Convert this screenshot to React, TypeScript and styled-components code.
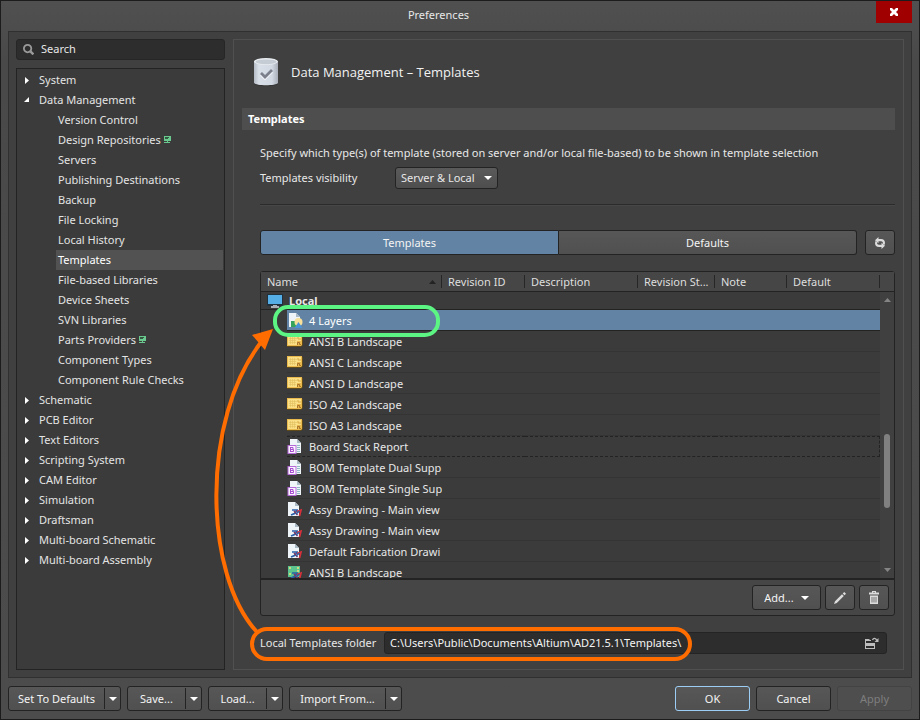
import React from "react";
import styled, { createGlobalStyle, css } from "styled-components";

const Global = createGlobalStyle`
  *, *::before, *::after { box-sizing: border-box; }
  body { margin: 0; background: #4c4c4c; }
  body, button, input, select, table {
    font-family: "Noto Sans", "Open Sans", sans-serif;
    font-size: 11px;
    line-height: 18px;
    color: #e8e8e8;
  }
  button, input, select { margin: 0; padding: 0; }
  svg { display: block; flex: none; }
`;

const Dialog = styled.main`
  position: relative;
  display: flex;
  flex-direction: column;
  height: 100vh;
  min-height: 600px;
  border: 1px solid #1c1c1c;
  background: linear-gradient(#505050, #494949 60px, #4c4c4c);
`;

const TitleBar = styled.header`
  display: flex;
  align-items: flex-start;
  height: 30px;
  padding-right: 7px;
`;

const DialogTitle = styled.h1`
  flex: 1;
  margin: 0;
  padding-top: 5px;
  text-align: center;
  font-size: 11px;
  font-weight: 400;
`;

const CloseButton = styled.button`
  display: grid;
  place-items: center;
  width: 36px;
  height: 22px;
  border: 0;
  background: #a00000;
`;

const Body = styled.div`
  flex: 1;
  min-height: 0;
  display: flex;
  gap: 8px;
  margin: 0 7px;
  padding: 7px;
  border: 1px solid #303030;
  background: #404040;
`;

const Sidebar = styled.nav`
  display: flex;
  flex-direction: column;
  gap: 8px;
  width: 209px;
  flex: none;
`;

const SearchBox = styled.label`
  display: flex;
  align-items: center;
  gap: 7px;
  height: 21px;
  padding: 0 6px 1px;
  border: 1px solid #262626;
  border-radius: 3px;
  background: #2d2d2d;
  input {
    flex: 1;
    min-width: 0;
    border: 0;
    outline: 0;
    background: transparent;
    &::placeholder { color: #e8e8e8; opacity: 1; }
  }
`;

const Tree = styled.ul`
  flex: 1;
  min-height: 0;
  overflow: hidden;
  margin: 0;
  padding: 1px 1px 0 6px;
  list-style: none;
  border: 1px solid #232323;
  background: #3b3b3b;
  ul { margin: 0; padding: 0 0 0 33px; list-style: none; }
`;

const TreeItem = styled.button<{ $active?: boolean; $leaf?: boolean }>`
  display: flex;
  align-items: center;
  gap: ${(p) => (p.$leaf ? 2 : 6)}px;
  width: 100%;
  height: 20px;
  padding-left: ${(p) => (p.$leaf ? 2 : 1)}px;
  border: 0;
  text-align: left;
  white-space: nowrap;
  background: ${(p) => (p.$active ? "#525252" : "transparent")};
  color: ${(p) => (p.$active ? "#ffffff" : "#e4e4e4")};
`;

const Twisty = styled.span`
  width: 9px;
`;

const Group = styled.section`
  flex: 1;
  min-width: 0;
  display: flex;
  flex-direction: column;
  padding: 0 8px 15px;
  border: 1px solid #505050;
`;

const GroupHead = styled.div`
  display: flex;
  align-items: center;
  gap: 12px;
  height: 68px;
  padding: 0 11px 5px;
  h2 {
    margin: 0;
    font-family: "Open Sans", "Noto Sans", sans-serif;
    font-size: 13px;
    font-weight: 400;
    color: #f2f2f2;
  }
`;

const Band = styled.h3`
  margin: 0;
  padding: 2px 6px;
  background: #4e4e4e;
  font-size: 11px;
  font-weight: 700;
  color: #ffffff;
`;

const Form = styled.div`
  flex: 1;
  min-height: 0;
  display: flex;
  flex-direction: column;
  padding: 14px 0 0 18px;
`;

const Note = styled.p`
  margin: 0 0 5px;
`;

const FieldRow = styled.div<{ $labelWidth: number }>`
  display: flex;
  align-items: center;
  label { flex: none; width: ${(p) => p.$labelWidth}px; }
`;

const SelectWrap = styled.span`
  display: grid;
  align-items: center;
  select, svg { grid-area: 1 / 1; }
  svg { justify-self: end; margin-right: 6px; pointer-events: none; }
  select {
    appearance: none;
    width: 103px;
    height: 22px;
    padding: 0 5px;
    border: 1px solid #232323;
    border-radius: 3px;
    background: linear-gradient(#5a5a5a, #4e4e4e);
  }
`;

const Divider = styled.hr`
  width: 100%;
  height: 2px;
  margin: 15px 0 24px;
  border: 0;
  border-top: 1px solid #2b2b2b;
  border-bottom: 1px solid #474747;
`;

const TabRow = styled.div`
  display: flex;
  gap: 8px;
  margin-bottom: 16px;
`;

const Tabs = styled.div`
  flex: 1;
  display: flex;
`;

const raised = css`
  height: 25px;
  border: 1px solid #232323;
  border-radius: 3px;
  background: linear-gradient(#575757, #505050);
  color: #f4f4f4;
`;

const Tab = styled.button<{ $selected?: boolean }>`
  ${raised}
  flex: 1;
  ${(p) =>
    p.$selected
      ? css`
          border-radius: 3px 0 0 3px;
          background: #6283a3;
        `
      : css`
          border-left: 0;
          border-radius: 0 3px 3px 0;
        `}
`;

const Button = styled.button<{ $width: number; $primary?: boolean }>`
  ${raised}
  display: flex;
  align-items: center;
  justify-content: center;
  gap: 7px;
  width: ${(p) => p.$width}px;
  ${(p) => p.$primary && "border-color: #9ccdf5;"}
  &:disabled { border-color: #434343; background: #4e4e4e; color: #7e7e7e; }
`;

const Grid = styled.div`
  flex: 1;
  min-height: 0;
  display: flex;
  flex-direction: column;
  border: 1px solid #232323;
  border-radius: 3px;
  background: #464646;
`;

const List = styled.div`
  position: relative;
  flex: 1;
  min-height: 0;
  overflow: hidden;
  border-bottom: 2px solid #232323;
  background: #3b3b3b;
`;

const Table = styled.table`
  width: 100%;
  table-layout: fixed;
  border-collapse: separate;
  border-spacing: 0;
  th, td { padding: 0; overflow: hidden; white-space: nowrap; text-align: left; }
`;

const Col = styled.col<{ $w?: number }>`
  ${(p) => p.$w && `width: ${p.$w}px;`}
`;

const HeadCell = styled.th`
  height: 20px;
  background: #464646;
  border-bottom: 1px solid #232323;
  font-weight: 400;
  color: #dedede;
`;

const HeadLabel = styled.span`
  display: flex;
  align-items: center;
  justify-content: space-between;
  height: 13px;
  padding: 0 5px 0 6px;
  border-right: 1px solid #262626;
`;

const RootRow = styled.tr`
  td { height: 18px; border-bottom: 1px solid #232323; }
`;

const RootLabel = styled.span`
  display: flex;
  align-items: center;
  gap: 6px;
  height: 17px;
  padding-left: 6px;
  font-weight: 700;
`;

type RowState = "plain" | "selected" | "focused";

const rowSkin = {
  plain: "border-bottom: 1px solid #343434;",
  selected: "border-bottom: 1px solid #232323; background: #6283a3; color: #ffffff;",
  focused: "border-top: 1px dashed #232323; border-bottom: 1px dashed #232323;",
};

const Cell = styled.td<{ $state: RowState; $end?: boolean }>`
  height: 21px;
  ${(p) => rowSkin[p.$state]}
  ${(p) => p.$end && p.$state === "focused" && "border-right: 1px dashed #232323;"}
`;

const NameCell = styled.td`
  height: 21px;
`;

const NameBox = styled.span<{ $state: RowState }>`
  display: flex;
  align-items: center;
  gap: 6px;
  height: 21px;
  margin-left: 26px;
  padding-top: ${(p) => (p.$state === "focused" ? 0 : 2)}px;
  overflow: hidden;
  ${(p) => rowSkin[p.$state]}
`;

const ScrollTrack = styled.div`
  position: absolute;
  top: 20px;
  right: 0;
  bottom: 0;
  width: 14px;
  display: flex;
  flex-direction: column;
  align-items: center;
  padding: 6px 0;
  background: #404040;
`;

const ScrollSpace = styled.span<{ $grow: number }>`
  flex: ${(p) => p.$grow};
`;

const ScrollThumb = styled.span`
  flex: 74;
  width: 6px;
  border-radius: 3px;
  background: #808080;
`;

const GridBar = styled.div`
  display: flex;
  justify-content: flex-end;
  gap: 4px;
  padding: 5px;
`;

const PathRow = styled(FieldRow)`
  margin: 16px 8px 0 0;
`;

const PathBox = styled.div`
  flex: 1;
  display: flex;
  align-items: center;
  height: 22px;
  padding: 0 7px 0 5px;
  border: 1px solid #242424;
  border-radius: 3px;
  background: #2d2d2d;
  input { flex: 1; min-width: 0; border: 0; outline: 0; background: transparent; color: #f4f4f4; }
  button { border: 0; background: transparent; }
`;

const Footer = styled.footer`
  display: flex;
  gap: 6px;
  padding: 8px 7px;
`;

const Spacer = styled.span`
  flex: 1;
`;

const Split = styled.span<{ $width: number }>`
  ${raised}
  display: flex;
  align-items: center;
  width: ${(p) => p.$width}px;
  button {
    height: 100%;
    border: 0;
    background: transparent;
    color: #f4f4f4;
    white-space: nowrap;
  }
  button:first-child { flex: 1; }
  button:last-child {
    display: grid;
    place-items: center;
    width: 16px;
    height: 21px;
    border-left: 1px solid #232323;
  }
`;

const Markup = styled.svg`
  position: absolute;
  top: -1px;
  left: -1px;
  pointer-events: none;
`;

const Caret = () => (
  <svg width="8" height="4" viewBox="0 0 8 4" aria-hidden="true">
    <path d="M0 0H8L4 4Z" fill="#fff" />
  </svg>
);

const Arrow = ({ up }: { up?: boolean }) => (
  <svg width="7" height="4" viewBox="0 0 7 4" aria-hidden="true">
    <path d={up ? "M0 4H7L3.500 0Z" : "M0 0H7L3.500 4Z"} fill="#858585" />
  </svg>
);

const SearchIcon = () => (
  <svg width="11" height="11" viewBox="0 0 11 11" fill="none" stroke="#9a9a9a" aria-hidden="true">
    <circle cx="4.600" cy="4.600" r="3.700" strokeWidth="1.800" />
    <path d="M7.200 7.200L10.400 10.400" strokeWidth="2.400" />
  </svg>
);

const ServerIcon = () => (
  <svg width="8" height="8" viewBox="0 0 8 8" aria-hidden="true">
    <path d="M1 0H8V5H5V6H7V7H1V6H4V5H1Z" fill="#69c98f" />
    <path d="M2 1H6V2H5V3H2Z" fill="#34583f" />
  </svg>
);

const DatabaseIcon = () => (
  <svg width="26" height="30" viewBox="0 0 26 30" aria-hidden="true">
    <defs>
      <linearGradient id="drum">
        <stop offset="0" stopColor="#b4bbc5" />
        <stop offset=".2" stopColor="#d9dfe7" />
        <stop offset=".75" stopColor="#d2d9e3" />
        <stop offset="1" stopColor="#a7aeb8" />
      </linearGradient>
    </defs>
    <path d="M1 5V27C3 30 23 30 25 27V5Z" fill="#2e2e2e" opacity=".6" />
    <path d="M1 4V26C3 29 23 29 25 26V4Z" fill="url(#drum)" />
    <ellipse cx="13" cy="4.500" rx="12" ry="3.500" fill="#e9edf1" />
    <ellipse cx="13" cy="4.800" rx="10.500" ry="2.400" fill="#c6ccd4" />
    <path d="M8 16L12 20L19 13" transform="translate(0 1.500)" fill="none" stroke="#f2f5f8" strokeWidth="2.600" />
    <path d="M8 16L12 20L19 13" fill="none" stroke="#7c7f8c" strokeWidth="2.800" />
  </svg>
);

const MonitorIcon = () => (
  <svg width="16" height="14" viewBox="0 0 16 14" aria-hidden="true">
    <rect width="16" height="12" rx="1" fill="#20303d" />
    <rect x="1" y="1" width="14" height="9" fill="#55aee6" />
    <path d="M6 11H10V12H12V14H4V12H6Z" fill="#a9afb5" />
  </svg>
);

const Page = ({ x = 1 }: { x?: number }) => (
  <>
    <path d={`M${x} 0H${x + 7}L${x + 11} 4V14H${x}Z`} fill="#eef4f8" />
    <path d={`M${x + 7} 0V4H${x + 11}Z`} fill="#a9bac6" />
  </>
);

type FileKind = "layers" | "sheet" | "bom" | "draft" | "pcb";

const Pens = () => (
  <>
    <path d="M5 8H11M4 13L7.500 11.500L10 8.500" fill="none" stroke="#2a5fa8" strokeWidth="1.700" />
    <path d="M7 9L10.500 13" fill="none" stroke="#7d3a63" strokeWidth="1.500" />
    <path d="M10 9.500L14 8L12.500 14" fill="none" stroke="#d8303a" strokeWidth="1.700" />
    <path d="M9 12L12.500 9" fill="none" stroke="#2a5fa8" strokeWidth="1.500" />
  </>
);

const FileIcon = ({ kind }: { kind: FileKind }) => (
  <svg width="16" height="16" viewBox="0 0 16 16" aria-hidden="true">
    {kind === "layers" && (
      <>
        <Page x={2} />
        <rect x="4" y="8" width="6" height="6" fill="#35a35c" />
        <circle cx="11.500" cy="9" r="4" fill="#f6e09a" />
        <path d="M11.500 9L15.500 15H7.500Z" fill="#4b93d6" />
      </>
    )}
    {kind === "sheet" && (
      <>
        <path d="M0 2H16V11L14 13H0Z" fill="#5f4a1c" />
        <path d="M0 1H15V11L14 12H0Z" fill="#eab94e" />
        <path d="M1 2H14V7H10V11H1Z" fill="#fbdf86" />
        <path d="M2 4.500H10M2 6.500H9M2 8.500H9M3.500 3V10M5.500 3V10M7.500 3V10" stroke="#e0c060" strokeWidth=".6" />
        <path d="M11 3V5H14" fill="none" stroke="#d8ab45" />
        <path d="M10.500 11V8.500H12.500V10.500H14" fill="none" stroke="#a8732a" />
      </>
    )}
    {kind === "bom" && (
      <>
        <Page x={3} />
        <path d="M10 6.500H13M10 8.500H13M10 10.500H13M10 12.500H13" stroke="#8fbcc4" />
        <rect x="1" y="6.500" width="8" height="8" fill="#fbf3ff" stroke="#b46ad8" />
        <path d="M3.500 8V13M3 8.500H6V10.500H4M6 10.500H6.500V12.500H3" fill="none" stroke="#a64fd0" />
      </>
    )}
    {kind === "draft" && (
      <>
        <Page />
        <Pens />
      </>
    )}
    {kind === "pcb" && (
      <>
        <rect x="1" y="1" width="12" height="11" fill="#5cc48e" />
        <path d="M2 3H4M10 3H12M2 9H4M10 6H12" stroke="#f0e07a" strokeWidth="1.500" />
        <Pens />
      </>
    )}
  </svg>
);

const RefreshIcon = () => (
  <svg width="12" height="12" viewBox="0 0 12 12" aria-hidden="true">
    <path
      d="M4.500 0V2H7C9.500 2 11 3.500 11 6L10.500 8L8.800 7C9.300 5.200 8.500 4.300 7 4.300H4.500V6.300L1 3.200Z"
      fill="#dcdcdc"
    />
    <path
      d="M7.500 12V10H5C2.500 10 1 8.500 1 6L1.500 4L3.200 5C2.700 6.800 3.500 7.700 5 7.700H7.500V5.700L11 8.800Z"
      fill="#dcdcdc"
    />
  </svg>
);

const PencilIcon = () => (
  <svg width="12" height="12" viewBox="0 0 12 12" fill="#dcdcdc" aria-hidden="true">
    <path d="M0 12L1 9.200L8 2.200L9.800 4L2.800 11ZM8.700 1.500L10.200 0L12 1.800L10.500 3.300Z" />
  </svg>
);

const TrashIcon = () => (
  <svg width="10" height="13" viewBox="0 0 10 13" aria-hidden="true">
    <path d="M3 0H7V1.500H10V3.500H0V1.500H3ZM4 1V1.500H6V1Z" fill="#dcdcdc" />
    <path d="M1 4.500H9V13H1Z" fill="#dcdcdc" />
    <path d="M3 6V11.500M5 6V11.500M7 6V11.500" stroke="#777" />
  </svg>
);

const BrowseIcon = () => (
  <svg width="14" height="12" viewBox="0 0 14 12" fill="none" aria-hidden="true">
    <path d="M0 2H4L5 3H6V4H1V6H10V12H0ZM1 9V11H9V9Z" fill="#bdbdbd" fillRule="evenodd" />
    <path d="M7.500 3C8.500 .8 10.500 .8 12 3.500" stroke="#bdbdbd" strokeWidth="1.400" />
    <path d="M13.500 1V5H9.500Z" fill="#bdbdbd" />
  </svg>
);

const leaves: { name: string; server?: boolean }[] = [
  { name: "Version Control" },
  { name: "Design Repositories", server: true },
  { name: "Servers" },
  { name: "Publishing Destinations" },
  { name: "Backup" },
  { name: "File Locking" },
  { name: "Local History" },
  { name: "Templates" },
  { name: "File-based Libraries" },
  { name: "Device Sheets" },
  { name: "SVN Libraries" },
  { name: "Parts Providers", server: true },
  { name: "Component Types" },
  { name: "Component Rule Checks" },
];

const branches = [
  "System", "Data Management", "Schematic", "PCB Editor", "Text Editors", "Scripting System",
  "CAM Editor", "Simulation", "Draftsman", "Multi-board Schematic", "Multi-board Assembly",
];

const columns: { name: string; width?: number }[] = [
  { name: "Name", width: 181 },
  { name: "Revision ID", width: 83 },
  { name: "Description" },
  { name: "Revision St...", width: 77 },
  { name: "Note", width: 72 },
  { name: "Default", width: 93 },
];

const files: { name: string; kind: FileKind; state?: RowState }[] = [
  { name: "4 Layers", kind: "layers", state: "selected" },
  { name: "ANSI B Landscape", kind: "sheet" },
  { name: "ANSI C Landscape", kind: "sheet" },
  { name: "ANSI D Landscape", kind: "sheet" },
  { name: "ISO A2 Landscape", kind: "sheet" },
  { name: "ISO A3 Landscape", kind: "sheet" },
  { name: "Board Stack Report", kind: "bom", state: "focused" },
  { name: "BOM Template Dual Supp", kind: "bom" },
  { name: "BOM Template Single Sup", kind: "bom" },
  { name: "Assy Drawing - Main view", kind: "draft" },
  { name: "Assy Drawing - Main view", kind: "draft" },
  { name: "Default Fabrication Drawi", kind: "draft" },
  { name: "ANSI B Landscape", kind: "pcb" },
];

const splitButtons = [
  { name: "Set To Defaults", width: 113 },
  { name: "Save...", width: 75 },
  { name: "Load...", width: 75 },
  { name: "Import From...", width: 113 },
];

function NavTree() {
  return (
    <Tree>
      {branches.map((name) => {
        const open = name === "Data Management";
        return (
          <li key={name}>
            <TreeItem aria-expanded={open}>
              <Twisty>
                <svg width="6" height="8" viewBox="0 0 6 8" aria-hidden="true">
                  <path d={open ? "M5 1V6H0Z" : "M1 1L5 4.500L1 8Z"} fill="#fff" />
                </svg>
              </Twisty>
              {name}
            </TreeItem>
            {open && (
              <ul>
                {leaves.map((leaf) => (
                  <li key={leaf.name}>
                    <TreeItem $leaf $active={leaf.name === "Templates"}>
                      {leaf.name}
                      {leaf.server && <ServerIcon />}
                    </TreeItem>
                  </li>
                ))}
              </ul>
            )}
          </li>
        );
      })}
    </Tree>
  );
}

function TemplateList() {
  return (
    <List>
      <Table>
        <colgroup>
          {columns.map((c) => (
            <Col key={c.name} $w={c.width} />
          ))}
          <Col $w={14} />
        </colgroup>
        <thead>
          <tr>
            {columns.map((c) => (
              <HeadCell key={c.name} scope="col">
                <HeadLabel>
                  {c.name}
                  {c.name === "Name" && (
                    <svg width="7" height="4" viewBox="0 0 7 4" aria-hidden="true">
                      <path d="M0 4H7L3.500 0Z" fill="#232323" />
                    </svg>
                  )}
                </HeadLabel>
              </HeadCell>
            ))}
            <HeadCell as="td" />
          </tr>
        </thead>
        <tbody>
          <RootRow>
            <td colSpan={7}>
              <RootLabel>
                <MonitorIcon />
                Local
              </RootLabel>
            </td>
          </RootRow>
          {files.map((f, i) => {
            const state = f.state ?? "plain";
            return (
              <tr key={i}>
                <NameCell>
                  <NameBox $state={state}>
                    <FileIcon kind={f.kind} />
                    {f.name}
                  </NameBox>
                </NameCell>
                {columns.slice(1).map((c) => (
                  <Cell key={c.name} $state={state} $end={c.name === "Default"} />
                ))}
                <td />
              </tr>
            );
          })}
        </tbody>
      </Table>
      <ScrollTrack>
        <Arrow up />
        <ScrollSpace $grow={131} />
        <ScrollThumb />
        <ScrollSpace $grow={60} />
        <Arrow />
      </ScrollTrack>
    </List>
  );
}

export default function App() {
  return (
    <>
      <Global />
      <Dialog>
        <TitleBar>
          <DialogTitle>Preferences</DialogTitle>
          <CloseButton aria-label="Close">
            <svg width="8" height="8" viewBox="0 0 8 8" aria-hidden="true">
              <path d="M0 0H2L4 2L6 0H8V2L6 4L8 6V8H6L4 6L2 8H0V6L2 4L0 2Z" fill="#fff" />
            </svg>
          </CloseButton>
        </TitleBar>
        <Body>
          <Sidebar>
            <SearchBox>
              <SearchIcon />
              <input type="text" placeholder="Search" aria-label="Search" />
            </SearchBox>
            <NavTree />
          </Sidebar>
          <Group>
            <GroupHead>
              <DatabaseIcon />
              <h2>Data Management – Templates</h2>
            </GroupHead>
            <Band>Templates</Band>
            <Form>
              <Note>
                Specify which type(s) of template (stored on server and/or local file-based) to be shown in template
                selection
              </Note>
              <FieldRow $labelWidth={135}>
                <label htmlFor="visibility">Templates visibility</label>
                <SelectWrap>
                  <select id="visibility" defaultValue="both">
                    <option value="both">Server &amp; Local</option>
                  </select>
                  <Caret />
                </SelectWrap>
              </FieldRow>
              <Divider />
              <TabRow>
                <Tabs role="tablist">
                  <Tab role="tab" aria-selected="true" $selected>
                    Templates
                  </Tab>
                  <Tab role="tab" aria-selected="false">
                    Defaults
                  </Tab>
                </Tabs>
                <Button $width={30} aria-label="Refresh">
                  <RefreshIcon />
                </Button>
              </TabRow>
              <Grid>
                <TemplateList />
                <GridBar>
                  <Button $width={69}>
                    Add...
                    <Caret />
                  </Button>
                  <Button $width={30} aria-label="Edit">
                    <PencilIcon />
                  </Button>
                  <Button $width={30} aria-label="Delete">
                    <TrashIcon />
                  </Button>
                </GridBar>
              </Grid>
              <PathRow $labelWidth={124}>
                <label htmlFor="folder">Local Templates folder</label>
                <PathBox>
                  <input id="folder" type="text" defaultValue={"C:\\Users\\Public\\Documents\\Altium\\AD21.5.1\\Templates\\"} />
                  <button aria-label="Browse">
                    <BrowseIcon />
                  </button>
                </PathBox>
              </PathRow>
            </Form>
          </Group>
        </Body>
        <Footer>
          {splitButtons.map((b) => (
            <Split key={b.name} $width={b.width}>
              <button>{b.name}</button>
              <button aria-label={`${b.name} options`}>
                <Caret />
              </button>
            </Split>
          ))}
          <Spacer />
          <Button $width={75} $primary>
            OK
          </Button>
          <Button $width={75}>Cancel</Button>
          <Button $width={75} disabled>
            Apply
          </Button>
        </Footer>
        <Markup width="700" height="670" viewBox="0 0 700 670" fill="none" strokeWidth="4" aria-hidden="true">
          <rect x="275" y="307" width="163" height="28" rx="13" stroke="#5cf584" />
          <rect x="252" y="629" width="438" height="30" rx="15" stroke="#ff6d00" />
          <path d="M257 632C204 575 200 420 262 341" stroke="#ff6d00" />
          <path d="M273 329L252 335L265 350Z" fill="#ff6d00" />
        </Markup>
      </Dialog>
    </>
  );
}
